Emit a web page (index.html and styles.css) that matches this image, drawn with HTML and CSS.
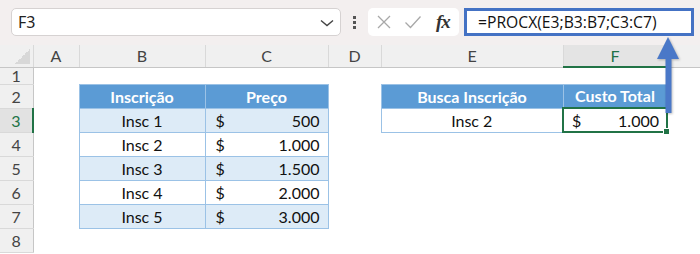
FILE: index.html
```html
<!DOCTYPE html>
<html lang="pt-BR">
<head>
    <meta charset="UTF-8">
    <title>PROCX</title>
    <link rel="stylesheet" href="styles.css">
</head>
<body>
<div class="app">
    <div class="toolbar">
        <div class="namebox">
            <span>F3</span>
            <svg class="chev" width="14" height="8" viewBox="0 0 14 8"><path d="M1 1.5 L7 6.5 L13 1.5" fill="none" stroke="#444" stroke-width="1.4"/></svg>
        </div>
        <div class="dots"><i></i><i></i><i></i></div>
        <div class="fbuttons">
            <svg width="16" height="16" viewBox="0 0 16 16"><path d="M2 2 L14 14 M14 2 L2 14" stroke="#a8a8a8" stroke-width="1.3" fill="none"/></svg>
            <svg width="18" height="16" viewBox="0 0 18 16"><path d="M1.5 8.5 L6.5 13.5 L16.5 2.5" stroke="#a8a8a8" stroke-width="1.3" fill="none"/></svg>
            <span class="fx">fx</span>
        </div>
        <div class="formula">=PROCX(E3;B3:B7;C3:C7)</div>
    </div>

    <table class="sheet">
        <colgroup>
            <col style="width:33px"><col style="width:46px"><col style="width:126px"><col style="width:123px">
            <col style="width:53px"><col style="width:182px"><col style="width:104px"><col style="width:33px">
        </colgroup>
        <tr class="colhead">
            <th class="corner"></th><th>A</th><th>B</th><th>C</th><th>D</th><th>E</th><th class="sel">F</th><th></th>
        </tr>
        <tr class="r1">
            <th class="rowhead">1</th><td></td><td></td><td></td><td></td><td></td><td></td><td></td>
        </tr>
        <tr>
            <th class="rowhead">2</th><td></td>
            <td class="th">Inscrição</td><td class="th">Preço</td>
            <td></td>
            <td class="th">Busca Inscrição</td><td class="th">Custo Total</td><td></td>
        </tr>
        <tr>
            <th class="rowhead cur">3</th><td></td>
            <td class="cell band c">Insc 1</td><td class="cell band"><div class="money"><span>$</span><span>500</span></div></td>
            <td></td>
            <td class="cell c">Insc 2</td>
            <td class="active"><div class="money"><span>$</span><span>1.000</span></div><span class="handle"></span></td><td></td>
        </tr>
        <tr>
            <th class="rowhead">4</th><td></td>
            <td class="cell c">Insc 2</td><td class="cell"><div class="money"><span>$</span><span>1.000</span></div></td>
            <td></td><td></td><td></td><td></td>
        </tr>
        <tr>
            <th class="rowhead">5</th><td></td>
            <td class="cell band c">Insc 3</td><td class="cell band"><div class="money"><span>$</span><span>1.500</span></div></td>
            <td></td><td></td><td></td><td></td>
        </tr>
        <tr>
            <th class="rowhead">6</th><td></td>
            <td class="cell c">Insc 4</td><td class="cell"><div class="money"><span>$</span><span>2.000</span></div></td>
            <td></td><td></td><td></td><td></td>
        </tr>
        <tr>
            <th class="rowhead">7</th><td></td>
            <td class="cell band c">Insc 5</td><td class="cell band"><div class="money"><span>$</span><span>3.000</span></div></td>
            <td></td><td></td><td></td><td></td>
        </tr>
        <tr class="r8">
            <th class="rowhead">8</th><td></td><td></td><td></td><td></td><td></td><td></td><td></td>
        </tr>
    </table>

    <svg class="arrow" width="30" height="82" viewBox="0 0 30 82">
        <path d="M13 0 L24 22 L16.5 22 L16.5 76 L10.5 76 L10.5 22 L2 22 Z" fill="#4a78c8"/>
    </svg>
</div>
</body>
</html>
```

FILE: styles.css
```css
body { margin: 0; background: #fff; font-family: Lato, "Open Sans", sans-serif; }
.app { position: relative; width: 700px; height: 254px; overflow: hidden; }

.toolbar { height: 45px; background: #f3efef; display: flex; align-items: flex-start; padding: 8px 0 0 11px; box-sizing: border-box; }
.namebox { width: 330px; height: 28px; box-sizing: border-box; background: #fff; border: 1px solid #d6d2d2; border-radius: 5px; display: flex; align-items: center; justify-content: space-between; padding: 0 6px 0 6px; font-family: "Noto Sans", sans-serif; font-size: 16px; color: #222; }
.chev { margin-top: 2px; }
.dots { width: 27px; height: 28px; display: flex; flex-direction: column; align-items: center; justify-content: center; gap: 2px; }
.dots i { width: 3px; height: 3px; background: #555; display: block; }
.fbuttons { width: 91px; height: 28px; box-sizing: border-box; background: #fff; border-radius: 5px; display: flex; align-items: center; gap: 12px; padding-left: 8px; margin-right: 5px; }
.fx { font-family: "Liberation Serif", serif; font-style: italic; font-weight: bold; font-size: 19px; color: #333; margin-left: 2px; letter-spacing: -1px; }
.formula { width: 230px; height: 28px; box-sizing: border-box; background: #fff; border: 3px solid #4472c4; padding-left: 11px; font-family: "Open Sans", sans-serif; font-size: 15.7px; line-height: 22px; color: #111; }

.sheet { border-collapse: collapse; table-layout: fixed; width: 700px; font-size: 16px; color: #111; }
.sheet th, .sheet td { padding: 0; white-space: nowrap; overflow: visible; }
.sheet tr { height: 24px; }
.sheet tr.colhead { height: 22px; }
.colhead th { background: #f0f0f0; font-weight: normal; color: #444; border-right: 1px solid #d9d9d9; border-bottom: 1px solid #c6c6c6; text-align: center; }
.colhead th.sel { background: #e4e4e4; color: #217346; border-bottom: 2px solid #217346; }
.corner { background: #f0f0f0 linear-gradient(to top left, #d8d8d8 50%, transparent 50%) no-repeat right 3px bottom 3px / 15px 15px !important; }
.rowhead { background: #f0f0f0; font-weight: normal; color: #444; border-right: 1px solid #c6c6c6; border-bottom: 1px solid #d9d9d9; text-align: center; }
.rowhead.cur { background: #e2e2e2; color: #217346; border-right: 2px solid #217346; }
.sheet tr.r1 { height: 17px; }
.r1 th { line-height: 16px; }

.th { background: #5b9bd5; color: #fff; font-weight: bold; text-align: center; border: 1px solid #9bc2e6; }
.cell { border: 1px solid #9bc2e6; }
.band { background: #ddebf7; }
.c { text-align: center; }
.money { display: flex; justify-content: space-between; padding: 0 8px 0 10px; }
.active { position: relative; border: 2px solid #217346; }
.active .money { padding: 0 7px 0 8px; }
.handle { position: absolute; right: -4px; bottom: -4px; width: 5px; height: 5px; background: #217346; border: 1px solid #fff; }

.arrow { position: absolute; left: 655px; top: 37px; filter: drop-shadow(1px 1px 1px rgba(0,0,0,0.25)); }
```
